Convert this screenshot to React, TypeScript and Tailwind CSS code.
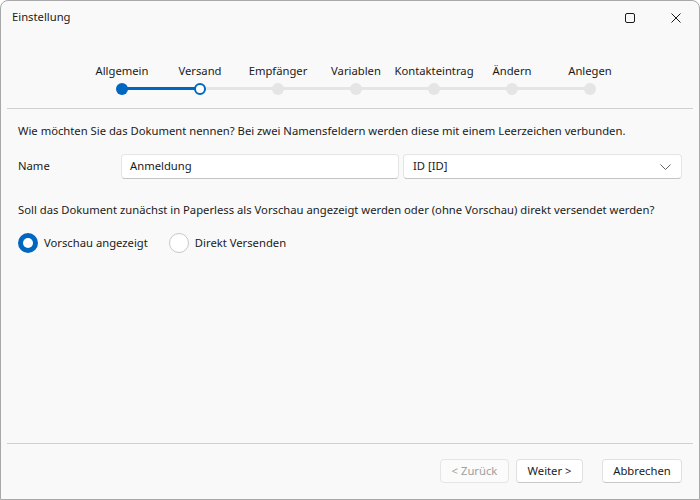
import React from "react";

const steps = ["Allgemein", "Versand", "Empfänger", "Variablen", "Kontakteintrag", "Ändern", "Anlegen"];

export default function App() {
  return (
    <div
      className="w-[700px] h-[500px] bg-[#f9f9f9] border border-[#a8a8a8] rounded-t-[8px] flex flex-col text-[11.25px] text-[#1b1b1b] overflow-hidden"
      style={{ fontFamily: '"Segoe UI", "Noto Sans", sans-serif' }}
    >
      {/* title bar */}
      <div className="h-[33px] flex items-center pl-[11px] shrink-0">
        <span className="flex-1">Einstellung</span>
        <div className="w-[46px] h-[32px] flex items-center justify-center">
          <div className="w-[10px] h-[10px] border border-[#1b1b1b] rounded-[2px] ml-[-1px]" />
        </div>
        <div className="w-[46px] h-[32px] flex items-center justify-center">
          <svg width="10" height="10" viewBox="0 0 10 10">
            <path d="M0.5 0.5 L9.5 9.5 M9.5 0.5 L0.5 9.5" stroke="#1b1b1b" strokeWidth="1" />
          </svg>
        </div>
      </div>

      {/* stepper */}
      <div className="pt-[29px] pl-[82px] h-[74px] shrink-0">
        <div className="flex">
          {steps.map((s, i) => (
            <div key={s} className="w-[78px] flex flex-col items-center">
              <span className="leading-[16px] whitespace-nowrap">{s}</span>
              <div className="relative w-full h-[12px] mt-[4px] flex items-center justify-center">
                {i > 0 && (
                  <div
                    className={`absolute left-0 right-1/2 h-[3px] top-[4px] ${i <= 1 ? "bg-[#0067c0]" : "bg-[#e5e5e5]"}`}
                  />
                )}
                {i < steps.length - 1 && (
                  <div
                    className={`absolute left-1/2 right-0 h-[3px] top-[4px] ${i < 1 ? "bg-[#0067c0]" : "bg-[#e5e5e5]"}`}
                  />
                )}
                {i === 0 && <div className="relative w-[12px] h-[12px] rounded-full bg-[#0067c0]" />}
                {i === 1 && (
                  <div className="relative w-[12px] h-[12px] rounded-full bg-white border-[2px] border-[#0067c0]" />
                )}
                {i > 1 && <div className="relative w-[12px] h-[12px] rounded-full bg-[#e5e5e5]" />}
              </div>
            </div>
          ))}
        </div>
      </div>

      <div className="mx-[6px] h-px bg-[#d0d0d0] shrink-0" />

      {/* content */}
      <div className="flex-1 px-[17px] pt-[14px]">
        <p className="leading-[16px]">
          Wie möchten Sie das Dokument nennen? Bei zwei Namensfeldern werden diese mit einem Leerzeichen verbunden.
        </p>
        <div className="flex items-center mt-[15px]">
          <span className="w-[103px]">Name</span>
          <div className="w-[278px] h-[25px] bg-white border border-[#e5e5e5] border-b-[#c4c4c4] rounded-[4px] flex items-center pl-[8px]">
            Anmeldung
          </div>
          <div className="w-[279px] h-[25px] ml-[4px] bg-white border border-[#e5e5e5] border-b-[#c4c4c4] rounded-[4px] flex items-center pl-[9px] pr-[10px]">
            <span className="flex-1">ID [ID]</span>
            <svg width="11" height="6" viewBox="0 0 11 6">
              <path d="M0.5 0.5 L5.5 5.5 L10.5 0.5" stroke="#606060" strokeWidth="1" fill="none" />
            </svg>
          </div>
        </div>
        <p className="leading-[16px] mt-[23px]">
          Soll das Dokument zunächst in Paperless als Vorschau angezeigt werden oder (ohne Vorschau) direkt versendet werden?
        </p>
        <div className="flex items-center mt-[15px]">
          <div className="w-[20px] h-[20px] rounded-full bg-[#0067c0] flex items-center justify-center">
            <div className="w-[10px] h-[10px] rounded-full bg-white" />
          </div>
          <span className="ml-[6px]">Vorschau angezeigt</span>
          <div className="w-[20px] h-[20px] rounded-full bg-white border border-[#c8c8c8] ml-[21px]" />
          <span className="ml-[6px]">Direkt Versenden</span>
        </div>
      </div>

      <div className="mx-[6px] h-px bg-[#d0d0d0] shrink-0" />

      {/* footer */}
      <div className="h-[55px] shrink-0 flex items-start justify-end pt-[15px] pr-[17px]">
        <div className="w-[69px] h-[24px] rounded-[4px] border border-[#e5e5e5] bg-[#fbfbfb] text-[#a0a0a0] flex items-center justify-center">
          &lt; Zurück
        </div>
        <div className="w-[67px] h-[24px] ml-[7px] rounded-[4px] border border-[#e0e0e0] border-b-[#c8c8c8] bg-white flex items-center justify-center">
          Weiter &gt;
        </div>
        <div className="w-[80px] h-[24px] ml-[19px] rounded-[4px] border border-[#e0e0e0] border-b-[#c8c8c8] bg-white flex items-center justify-center">
          Abbrechen
        </div>
      </div>
    </div>
  );
}
